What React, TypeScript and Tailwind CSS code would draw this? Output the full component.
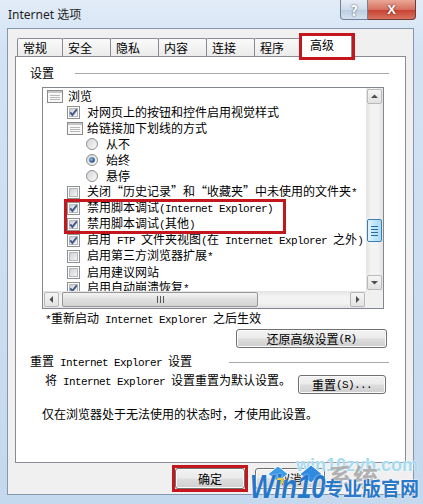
import type { ReactNode } from "react";

const M = ({ children }: { children: ReactNode }) => (
  <span className="whitespace-pre font-['Liberation_Mono',monospace] text-[11px] tracking-[-0.6px]">{children}</span>
);

const btn =
  "flex items-center justify-center rounded-[3px] border border-[#707070] bg-[linear-gradient(#f2f2f2_0%,#ebebeb_48%,#dddddd_52%,#cfcfcf_100%)] shadow-[inset_0_0_0_1px_#fbfbfb]";

function Check({ on }: { on: boolean }) {
  return (
    <svg width="13" height="13" viewBox="0 0 13 13" className="shrink-0">
      <rect x="0.5" y="0.5" width="12" height="12" fill="#fff" stroke="#8e8f8f" />
      <rect x="2.5" y="2.5" width="8" height="8" fill="url(#cbg)" stroke="#b3b7bc" />
      {on && <path d="M3.2 6.3 L5.4 8.9 L9.8 3.4" fill="none" stroke="#44598a" strokeWidth="1.9" />}
    </svg>
  );
}

function Radio({ on }: { on: boolean }) {
  return (
    <svg width="12" height="12" viewBox="0 0 12 12" className="shrink-0">
      <circle cx="6" cy="6" r="5.5" fill="url(#rbg)" stroke="#8e8f8f" />
      {on && <circle cx="6" cy="6" r="2.8" fill="url(#rdot)" />}
    </svg>
  );
}

function GroupIcon() {
  return (
    <svg width="16" height="13" viewBox="0 0 16 13" className="shrink-0">
      <rect x="0.5" y="0.5" width="15" height="12" fill="#f8f8f8" stroke="#8b8b8b" />
      <rect x="1" y="1" width="14" height="2" fill="#c6c6c6" />
      <path d="M3 5.5H13M3 7.5H13M3 9.5H13" stroke="#b8b8b8" />
    </svg>
  );
}

type Row = { level: 0 | 1 | 2; kind: "group" | "check" | "radio"; on?: boolean; label: ReactNode };

const rows: Row[] = [
  { level: 0, kind: "group", label: "浏览" },
  { level: 1, kind: "check", on: true, label: "对网页上的按钮和控件启用视觉样式" },
  { level: 1, kind: "group", label: "给链接加下划线的方式" },
  { level: 2, kind: "radio", on: false, label: "从不" },
  { level: 2, kind: "radio", on: true, label: "始终" },
  { level: 2, kind: "radio", on: false, label: "悬停" },
  { level: 1, kind: "check", on: false, label: <>关闭“历史记录”和“收藏夹”中未使用的文件夹<M>*</M></> },
  { level: 1, kind: "check", on: true, label: <>禁用脚本调试<M>(Internet Explorer)</M></> },
  { level: 1, kind: "check", on: true, label: <>禁用脚本调试<M>(</M>其他<M>)</M></> },
  {
    level: 1,
    kind: "check",
    on: true,
    label: <>启用<M> FTP </M>文件夹视图<M>(</M>在<M> Internet Explorer </M>之外<M>)</M></>,
  },
  { level: 1, kind: "check", on: false, label: <>启用第三方浏览器扩展<M>*</M></> },
  { level: 1, kind: "check", on: false, label: "启用建议网站" },
  { level: 1, kind: "check", on: true, label: <>启用自动崩溃恢复<M>*</M></> },
];

const indent = { 0: "pl-[4px]", 1: "pl-[24px]", 2: "pl-[43px]" };

const tabs = ["常规", "安全", "隐私", "内容", "连接", "程序"];

function Arrow({ dir }: { dir: "up" | "down" | "left" | "right" }) {
  const pts = {
    up: "1,5 4.5,1.5 8,5",
    down: "1,2 4.5,5.5 8,2",
    left: "5,1 1.5,4.5 5,8",
    right: "2,1 5.5,4.5 2,8",
  }[dir];
  const vert = dir === "up" || dir === "down";
  return (
    <svg width={vert ? 9 : 7} height={vert ? 7 : 9} viewBox={vert ? "0 0 9 7" : "0 0 7 9"}>
      <polygon points={pts} fill="#4d4d4d" />
    </svg>
  );
}

const sbBtn =
  "m-px flex items-center justify-center rounded-[2px] border border-[#b9b9b9] bg-[linear-gradient(#f5f5f5,#e2e2e2)]";

export default function App() {
  return (
    <div className="relative w-[423px] h-[504px] overflow-hidden bg-[linear-gradient(180deg,#e2ecf8_0%,#d3e3f4_10%,#c4d8ee_100%)] text-[12px] leading-[16px] text-black font-['Noto_Sans_CJK_SC','Noto_Sans',sans-serif]">
      <svg width="0" height="0" className="absolute">
        <defs>
          <linearGradient id="cbg" x1="0" y1="0" x2="1" y2="1">
            <stop offset="0" stopColor="#cbcfd5" />
            <stop offset="1" stopColor="#f7f7f7" />
          </linearGradient>
          <linearGradient id="rbg" x1="0" y1="0" x2="1" y2="1">
            <stop offset="0" stopColor="#cfd2d7" />
            <stop offset="1" stopColor="#fbfbfb" />
          </linearGradient>
          <radialGradient id="rdot" cx="0.4" cy="0.4" r="0.6">
            <stop offset="0" stopColor="#8cc0ec" />
            <stop offset="1" stopColor="#1d3f76" />
          </radialGradient>
        </defs>
      </svg>

      {/* title bar */}
      <div className="h-[28px] flex items-start">
        <span className="pl-[8px] pt-[7px] text-[12px] text-[#1e1e1e] font-['Noto_Sans','Noto_Sans_CJK_SC',sans-serif]">
          Internet 选项
        </span>
        <div className="ml-auto mr-[7px] flex">
          <div className="w-[28px] h-[20px] flex items-center justify-center rounded-bl-[4px] border border-t-0 border-[#6f8299] bg-[linear-gradient(#e6eef7,#cfdcea_50%,#bccde0_51%,#d4e1ef)] text-[14px] font-bold text-white [text-shadow:0_0_2px_#33445a]">
            ?
          </div>
          <div className="w-[48px] h-[20px] flex items-center justify-center rounded-br-[4px] border border-l-0 border-t-0 border-[#6e3a34] bg-[linear-gradient(#eaa796,#d7705f_50%,#c4402f_51%,#d8725f)] text-[13px] font-bold text-white font-['Liberation_Sans',sans-serif] [text-shadow:0_0_2px_#4a1710]">
            X
          </div>
        </div>
      </div>

      {/* client */}
      <div className="ml-[7px] w-[407px] h-[467px] border border-[#8597ad] bg-[#f0f0f0] flex flex-col">
        {/* tabs */}
        <div className="ml-[7px] mt-[5px] h-[22px] pl-[2px] flex items-end">
          {tabs.map((t, i) => (
            <div
              key={t}
              className={`${i === 0 ? "w-[46px]" : "w-[49px] -ml-px"} h-[18px] pl-[5px] flex items-center rounded-t-[2px] border border-b-0 border-[#898c95] bg-[linear-gradient(#fafafa,#ebebeb)]`}
            >
              {t}
            </div>
          ))}
          <div className="relative z-10 -ml-[2px] -mb-px w-[51px] h-[23px] pl-[8px] pb-[2px] flex items-center rounded-t-[2px] border border-b-0 border-[#898c95] bg-white">
            高级
            <div className="absolute -left-[3px] -top-[2px] w-[56px] h-[27px] border-[3px] border-[#c4171d]" />
          </div>
        </div>

        {/* tab panel */}
        <div className="ml-[7px] w-[391px] h-[407px] border border-[#898c95] bg-white flex flex-col">
          <div className="mt-[8px] h-[16px] pl-[14px] pr-[16px] flex items-center">
            <span>设置</span>
            <div className="ml-[21px] flex-1 h-px bg-[#a9a9a9]" />
          </div>

          {/* list box */}
          <div className="mt-[6px] ml-[26px] w-[342px] h-[222px] border border-[#828790] flex flex-col">
            <div className="h-[203px] flex">
              <div className="relative flex-1 overflow-hidden">
                {rows.map((r, i) => (
                  <div key={i} className={`h-[16px] flex items-center whitespace-nowrap ${indent[r.level]}`}>
                    <div className={`${r.kind === "group" && r.level === 0 ? "w-[21px]" : "w-[20px]"} shrink-0 flex items-center`}>
                      {r.kind === "group" && <GroupIcon />}
                      {r.kind === "check" && <Check on={!!r.on} />}
                      {r.kind === "radio" && <Radio on={!!r.on} />}
                    </div>
                    <span>{r.label}</span>
                  </div>
                ))}
                <div className="absolute left-[21px] top-[111px] w-[222px] h-[35px] border-[3px] border-[#c4171d]" />
              </div>
              {/* vertical scrollbar */}
              <div className="w-[17px] flex flex-col bg-[linear-gradient(90deg,#e3e3e3,#f3f3f3_30%,#f3f3f3_70%,#e3e3e3)]">
                <div className={`${sbBtn} h-[15px]`}>
                  <Arrow dir="up" />
                </div>
                <div className="h-[114px]" />
                <div className="mx-px h-[23px] rounded-[2px] border border-[#3c7fb1] bg-[linear-gradient(90deg,#e3f4fc,#bfe6f9_50%,#a8dbf6)] flex flex-col items-center justify-center gap-[2px]">
                  <div className="w-[7px] h-px bg-[#2d6a9f]" />
                  <div className="w-[7px] h-px bg-[#2d6a9f]" />
                  <div className="w-[7px] h-px bg-[#2d6a9f]" />
                  <div className="w-[7px] h-px bg-[#2d6a9f]" />
                </div>
                <div className="flex-1" />
                <div className={`${sbBtn} h-[15px]`}>
                  <Arrow dir="down" />
                </div>
              </div>
            </div>
            {/* horizontal scrollbar */}
            <div className="h-[17px] flex">
              <div className="flex-1 flex bg-[linear-gradient(#e3e3e3,#f3f3f3_30%,#f3f3f3_70%,#e3e3e3)]">
                <div className={`${sbBtn} w-[15px]`}>
                  <Arrow dir="left" />
                </div>
                <div className="my-px ml-[2px] w-[196px] rounded-[2px] border border-[#979797] bg-[linear-gradient(#f4f4f4,#e0e0e0_50%,#d3d3d3)] flex items-center justify-center gap-[2px]">
                  <div className="w-px h-[7px] bg-[#555]" />
                  <div className="w-px h-[7px] bg-[#555]" />
                  <div className="w-px h-[7px] bg-[#555]" />
                </div>
                <div className="flex-1" />
                <div className={`${sbBtn} w-[15px]`}>
                  <Arrow dir="right" />
                </div>
              </div>
              <div className="w-[17px] bg-[#f0f0f0]" />
            </div>
          </div>

          <div className="mt-px h-[16px] pl-[29px] whitespace-nowrap">
            <M>*</M>重新启动<M> Internet Explorer </M>之后生效
          </div>
          <div className="mt-[3px] flex justify-end pr-[18px]">
            <div className={`${btn} w-[151px] h-[19px]`}>
              还原高级设置<M>(R)</M>
            </div>
          </div>

          <div className="mt-[6px] h-[16px] pl-[14px] pr-[16px] flex items-center whitespace-nowrap">
            <span>
              重置<M> Internet Explorer </M>设置
            </span>
            <div className="ml-[37px] flex-1 h-px bg-[#a9a9a9]" />
          </div>
          <div className="mt-[2px] pl-[29px] pr-[19px] flex items-start whitespace-nowrap">
            <span className="h-[16px]">
              将<M> Internet Explorer </M>设置重置为默认设置。
            </span>
            <div className={`${btn} ml-auto mt-[3px] w-[88px] h-[19px]`}>
              重置<M>(S)...</M>
            </div>
          </div>
          <div className="mt-[12px] h-[16px] pl-[26px] whitespace-nowrap">仅在浏览器处于无法使用的状态时，才使用此设置。</div>
        </div>

        {/* dialog buttons */}
        <div className="mt-[5px] ml-[167px] flex gap-[10px]">
          <div className="relative">
            <div className={`${btn} w-[70px] h-[21px]`}>确定</div>
            <div className="absolute -inset-[3px] border-[3px] border-[#c4171d]" />
          </div>
          <div className={`${btn} w-[70px] h-[21px]`}>取消</div>
        </div>
      </div>

      {/* watermark */}
      <div className="absolute left-[296px] top-[455px] text-[18px] leading-[20px] font-bold text-[#a6dbf2] font-['Liberation_Sans',sans-serif] [text-shadow:0_0_2px_#fff]">
        win10zyb.com
      </div>
      <div className="absolute left-[328px] top-[462px] text-[25px] leading-[28px] font-bold text-[#7d7d7d]/60 [text-shadow:0_0_2px_#fff]">
        系统
      </div>
      <svg className="absolute left-[266px] top-[464px]" width="58" height="24" viewBox="0 0 58 24">
        <polygon points="2,10 12,2 22,10 12,18" fill="#3d9ae6" stroke="#fff" strokeWidth="1" />
        <polygon points="34,10 45,1 56,10 45,19" fill="#2f8ae0" stroke="#fff" strokeWidth="1" />
        <circle cx="14" cy="17" r="3.5" fill="#f2c21c" />
      </svg>
      <div className="absolute left-[250px] top-[470px] text-[33px] leading-[34px] italic font-bold text-[#2577c9] font-['Liberation_Sans',sans-serif] [text-shadow:0_0_2px_#fff] scale-x-[0.78] origin-left">
        Win10
      </div>
      <div className="absolute left-[324px] top-[476px] text-[19px] leading-[24px] font-bold text-[#2a78c8] [text-shadow:0_0_2px_#fff,0_0_1px_#fff]">
        专业版官网
      </div>
    </div>
  );
}
